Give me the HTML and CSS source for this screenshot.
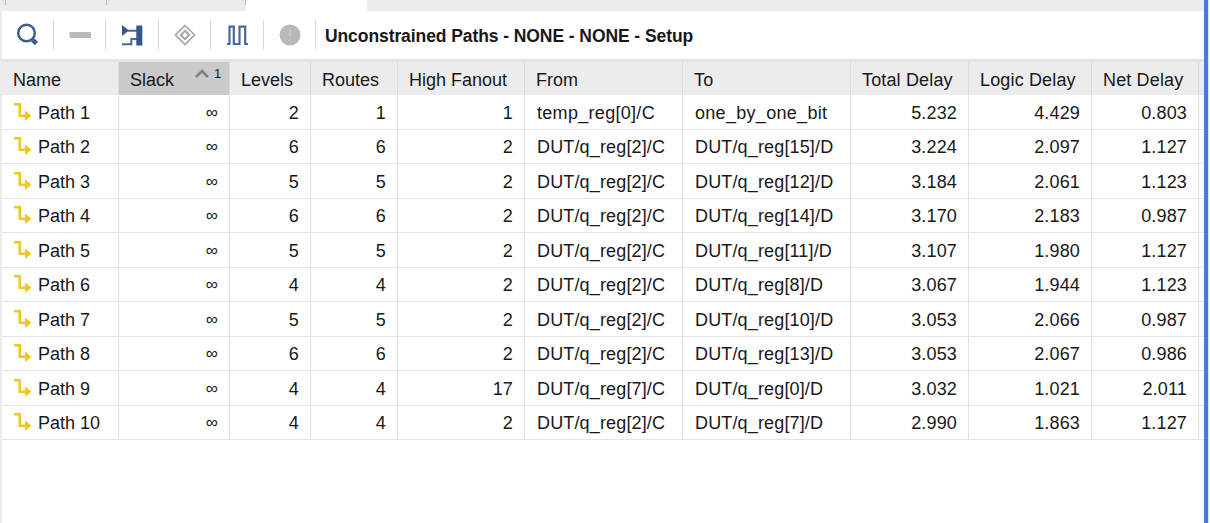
FILE: index.html
```html
<!DOCTYPE html>
<html lang="en">
<head>
<meta charset="utf-8">
<title>Unconstrained Paths</title>
<link rel="stylesheet" href="styles.css">
</head>
<body>
<svg class="defs" width="0" height="0"><symbol id="path" viewBox="0 0 20 20"><path d="M1 2.2H6.8V13.8H12" fill="none" stroke="#ecc820" stroke-width="2.6"/><path d="M12 8.6L18.5 13.8L12 19Z" fill="#ecc820"/></symbol></svg>
<div class="window">
<div class="tabs"><i class="tab t1"></i><i class="tab t2"></i><i class="tab t3"></i><i class="tab active"></i></div>
<div class="toolbar">
<span class="tool first"><svg width="24" height="24" viewBox="0 0 24 24"><circle cx="10.5" cy="10" r="8.3" fill="none" stroke="#3f5c90" stroke-width="2.5"/><path d="M16.5 17L20.5 20.5" stroke="#3f5c90" stroke-width="4.6"/></svg></span>
<span class="tool"><svg width="24" height="24" viewBox="0 0 24 24"><path d="M1.5 12H23" stroke="#b9b9b9" stroke-width="6"/></svg></span>
<span class="tool"><svg width="24" height="24" viewBox="0 0 24 24"><path d="M2 2L9 7.5L2 13Z" fill="#34568f"/><path d="M8 7.7H17M17 16H11.3V21.3H2" fill="none" stroke="#4a689b" stroke-width="2"/><path d="M16.3 2.5H22.3V22.5H16.3Z" fill="#34568f"/></svg></span>
<span class="tool"><svg width="24" height="24" viewBox="0 0 24 24" fill="none" stroke="#a5a5a5"><path d="M12 2.5L21.5 12L12 21.5L2.5 12Z" stroke-width="1.7"/><path d="M12 7.8L16.2 12L12 16.2L7.8 12Z" stroke-width="2"/></svg></span>
<span class="tool"><svg width="24" height="24" viewBox="0 0 24 24"><path d="M2 21H4.5V3.7H8.8V21H14.5V3.7H20.2V21H23" fill="none" stroke="#4a689b" stroke-width="2.2"/></svg></span>
<span class="tool"><svg width="24" height="24" viewBox="0 0 24 24"><circle cx="12" cy="12" r="10.5" fill="#b9b9b9"/><path d="M12 5.5V13.5M12 15.5V18" stroke="#c5c5c5" stroke-width="2"/></svg></span>
<b class="title">Unconstrained Paths - NONE - NONE - Setup</b>
</div>
<div class="table">
<div class="row head"><span>Name</span><span class="sorted">Slack<svg class="sort" width="16" height="12" viewBox="0 0 16 12"><path d="M2 9L8 3L14 9" fill="none" stroke="#808080" stroke-width="2.6"/></svg><small>1</small></span><span>Levels</span><span>Routes</span><span>High Fanout</span><span>From</span><span>To</span><span>Total Delay</span><span>Logic Delay</span><span>Net Delay</span></div>
<div class="row"><span><svg class="icon"><use href="#path"/></svg>Path 1</span><span>∞</span><span>2</span><span>1</span><span>1</span><span class="named">temp_reg[0]/C</span><span class="named">one_by_one_bit</span><span>5.232</span><span>4.429</span><span>0.803</span></div>
<div class="row"><span><svg class="icon"><use href="#path"/></svg>Path 2</span><span>∞</span><span>6</span><span>6</span><span>2</span><span>DUT/q_reg[2]/C</span><span>DUT/q_reg[15]/D</span><span>3.224</span><span>2.097</span><span>1.127</span></div>
<div class="row"><span><svg class="icon"><use href="#path"/></svg>Path 3</span><span>∞</span><span>5</span><span>5</span><span>2</span><span>DUT/q_reg[2]/C</span><span>DUT/q_reg[12]/D</span><span>3.184</span><span>2.061</span><span>1.123</span></div>
<div class="row"><span><svg class="icon"><use href="#path"/></svg>Path 4</span><span>∞</span><span>6</span><span>6</span><span>2</span><span>DUT/q_reg[2]/C</span><span>DUT/q_reg[14]/D</span><span>3.170</span><span>2.183</span><span>0.987</span></div>
<div class="row"><span><svg class="icon"><use href="#path"/></svg>Path 5</span><span>∞</span><span>5</span><span>5</span><span>2</span><span>DUT/q_reg[2]/C</span><span>DUT/q_reg[11]/D</span><span>3.107</span><span>1.980</span><span>1.127</span></div>
<div class="row"><span><svg class="icon"><use href="#path"/></svg>Path 6</span><span>∞</span><span>4</span><span>4</span><span>2</span><span>DUT/q_reg[2]/C</span><span>DUT/q_reg[8]/D</span><span>3.067</span><span>1.944</span><span>1.123</span></div>
<div class="row"><span><svg class="icon"><use href="#path"/></svg>Path 7</span><span>∞</span><span>5</span><span>5</span><span>2</span><span>DUT/q_reg[2]/C</span><span>DUT/q_reg[10]/D</span><span>3.053</span><span>2.066</span><span>0.987</span></div>
<div class="row"><span><svg class="icon"><use href="#path"/></svg>Path 8</span><span>∞</span><span>6</span><span>6</span><span>2</span><span>DUT/q_reg[2]/C</span><span>DUT/q_reg[13]/D</span><span>3.053</span><span>2.067</span><span>0.986</span></div>
<div class="row"><span><svg class="icon"><use href="#path"/></svg>Path 9</span><span>∞</span><span>4</span><span>4</span><span>17</span><span>DUT/q_reg[7]/C</span><span>DUT/q_reg[0]/D</span><span>3.032</span><span>1.021</span><span>2.011</span></div>
<div class="row"><span><svg class="icon"><use href="#path"/></svg>Path 10</span><span>∞</span><span>4</span><span>4</span><span>2</span><span>DUT/q_reg[2]/C</span><span>DUT/q_reg[7]/D</span><span>2.990</span><span>1.863</span><span>1.127</span></div>
</div>
</div>
</body>
</html>
```
FILE: styles.css
```css
* { box-sizing: border-box; }
body { margin: 0; height: 523px; overflow: hidden; display: flex; background: #fff; color: #181818; font: 18px/24px "Liberation Sans", Arial, sans-serif; }
.defs { position: absolute; }
.window { width: 1208px; height: 523px; border-right: 4px solid #4a7bd0; box-shadow: 1px 0 #dce6f7; }
.tabs { height: 11px; background: #ececec; display: flex; }
.tab { border-right: 1px solid #bcbcbc; height: 5px; }
.t1 { width: 6px; }
.t2 { width: 101px; }
.t3 { width: 139px; }
.active { width: 121px; height: 11px; background: #fff; border: 0; }
.toolbar { height: 48px; border-left: 2px solid #ececec; display: flex; align-items: center; }
.tool { width: 52.4px; height: 30px; padding-left: 14px; border-right: 1px solid #d8d8d8; display: flex; align-items: center; }
.tool.first { width: 52px; }
.title { padding: 2px 0 0 9px; font-size: 17.5px; letter-spacing: -.08px; white-space: nowrap; }
.table { height: 464px; border-left: 2px solid #ececec; border-top: 3px solid #e4e4e4; }
.row { display: grid; grid-template-columns: 117px 111px 81px 87px 127px 158px 168px 118px 123px 107px; height: 34.5px; border-bottom: 1px solid #e4e4e4; }
.row > span { border-right: 1px solid #e2e2e2; display: flex; align-items: center; justify-content: flex-end; padding: 2px 11px 0 0; white-space: nowrap; letter-spacing: .15px; }
.row > span:first-child { justify-content: flex-start; padding-left: 11px; letter-spacing: 0; }
.row > span:nth-child(2) { font-size: 17px; }
.row > span:nth-child(6), .row > span:nth-child(7) { justify-content: flex-start; padding-left: 12px; }
.row > .named { letter-spacing: .3px; }
.row.head { height: 33px; background: #ececec; border-bottom: 0; }
.row.head > span { justify-content: flex-start; padding: 2px 0 0 11px; letter-spacing: 0; border-color: #dcdcdc; }
.row.head > span:nth-child(n+7) { letter-spacing: .15px; }
.row.head > .sorted { background: #cacaca; font-size: 18px; }
.sort { margin: -12px 0 0 20px; }
.sorted small { font-size: 13px; line-height: 14px; margin: -12px 0 0 4px; }
.icon { width: 20px; height: 20px; margin: -2px 5px 0 0; flex: none; }
```
